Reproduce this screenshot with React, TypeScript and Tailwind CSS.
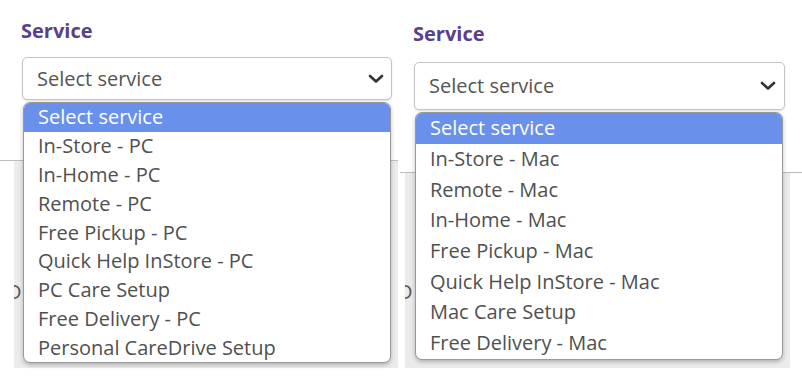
const pcServices = [
  "Select service",
  "In-Store - PC",
  "In-Home - PC",
  "Remote - PC",
  "Free Pickup - PC",
  "Quick Help InStore - PC",
  "PC Care Setup",
  "Free Delivery - PC",
  "Personal CareDrive Setup",
]

const macServices = [
  "Select service",
  "In-Store - Mac",
  "Remote - Mac",
  "In-Home - Mac",
  "Free Pickup - Mac",
  "Quick Help InStore - Mac",
  "Mac Care Setup",
  "Free Delivery - Mac",
]

function Chevron() {
  return (
    <svg width="16" height="10" viewBox="0 0 16 10" className="text-[#333]">
      <polyline points="2,2 8,7.5 14,2" fill="none" stroke="currentColor" strokeWidth="2.6" strokeLinecap="round" strokeLinejoin="round" />
    </svg>
  )
}

function ServiceList({ options, rowClass }: { options: string[]; rowClass: string }) {
  return (
    <ul className="absolute left-[1px] top-[calc(100%+2px)] z-10 w-[368px] overflow-hidden rounded-[7px] border border-[#9a9a9a] bg-white shadow-[0_2px_4px_rgba(0,0,0,0.25)]">
      {options.map((o, i) => (
        <li
          key={o}
          className={
            rowClass +
            " flex items-center pl-[14px] text-[20px] " +
            (i === 0 ? "bg-[#6990ea] text-white" : "text-[#505050]")
          }
        >
          {o}
        </li>
      ))}
    </ul>
  )
}

export default function App() {
  return (
    <div className="flex h-[380px] w-[802px] gap-[2px] overflow-hidden bg-white font-['Open_Sans',sans-serif]">
      {/* PC */}
      <div className="flex w-[398px] flex-col">
        <div className="pl-[21px] pt-[17px]">
          <h3 className="text-[20px] font-bold leading-[28px] text-[#5a3f8c]">Service</h3>
          <div className="relative mt-[12px] ml-[1px] w-[370px]">
            <div className="flex h-[43px] items-center justify-between rounded-[5px] border border-[#c4c4c4] bg-white pl-[14px] pr-[7px] shadow-[0_1px_2px_rgba(0,0,0,0.12)]">
              <span className="text-[20px] text-[#555]">Select service</span>
              <Chevron />
            </div>
            <ServiceList options={pcServices} rowClass="h-[28.8px]" />
          </div>
        </div>
        <div className="mt-[60px] border-t border-[#bdbdbd]">
          <div className="ml-[14px] h-[207px] overflow-hidden bg-[#ebebeb] pt-[116px] text-[20px] text-[#555]">
            <span className="-ml-[7px]">D</span>
          </div>
        </div>
      </div>

      {/* Mac */}
      <div className="flex w-[402px] flex-col">
        <div className="pl-[13px] pt-[20px]">
          <h3 className="text-[20px] font-bold leading-[28px] text-[#5a3f8c]">Service</h3>
          <div className="relative mt-[14px] ml-[1px] w-[371px]">
            <div className="flex h-[48px] items-center justify-between rounded-[5px] border border-[#c4c4c4] bg-white pl-[14px] pr-[8px] shadow-[0_1px_2px_rgba(0,0,0,0.12)]">
              <span className="text-[20px] text-[#555]">Select service</span>
              <Chevron />
            </div>
            <ServiceList options={macServices} rowClass="h-[30.7px]" />
          </div>
        </div>
        <div className="mt-[62px] border-t border-[#bdbdbd]">
          <div className="ml-[5px] mr-[12px] h-[195px] overflow-hidden bg-[#ebebeb] pt-[104px] text-[20px] text-[#555]">
            <span className="-ml-[7px]">D</span>
          </div>
        </div>
      </div>
    </div>
  )
}
